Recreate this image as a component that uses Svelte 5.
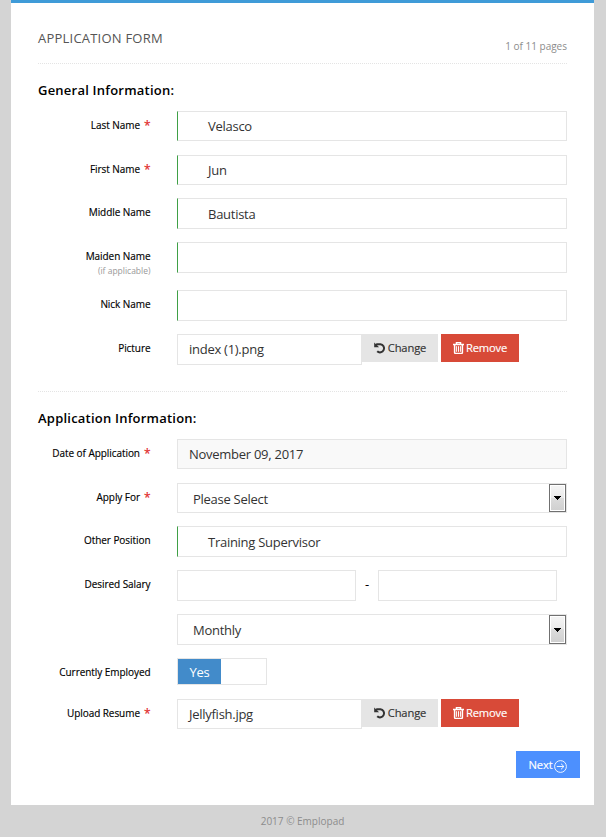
<script>
  const general = [
    { label: 'Last Name', req: true, kind: 'text', value: 'Velasco', h: 30, space: 44 },
    { label: 'First Name', req: true, kind: 'text', value: 'Jun', h: 30, space: 43 },
    { label: 'Middle Name', kind: 'text', value: 'Bautista', h: 31, space: 44 },
    { label: 'Maiden Name', note: '(if applicable)', kind: 'text', value: '', h: 31, space: 48 },
    { label: 'Nick Name', kind: 'text', value: '', h: 31, space: 44 },
    { label: 'Picture', kind: 'file', value: 'index (1).png', h: 31, space: 57 }
  ];
  const application = [
    { label: 'Date of Application', req: true, kind: 'date', value: 'November 09, 2017', h: 30, space: 44 },
    { label: 'Apply For', req: true, kind: 'select', value: 'Please Select', h: 30, space: 43 },
    { label: 'Other Position', kind: 'text', value: 'Training Supervisor', h: 31, space: 44 },
    { label: 'Desired Salary', kind: 'range', h: 31, space: 44 },
    { label: '', kind: 'select', value: 'Monthly', h: 31, space: 44 },
    { label: 'Currently Employed', kind: 'toggle', h: 27, space: 41 },
    { label: 'Upload Resume', req: true, kind: 'file', value: 'Jellyfish.jpg', h: 30, space: 52 }
  ];
</script>

{#snippet field(f)}
  <div class="row" style:height="{f.space}px">
    <div class="label">
      <span>{f.label}</span>{#if f.req}<b>*</b>{/if}
      {#if f.note}<small>{f.note}</small>{/if}
    </div>
    <div class="control" style:height="{f.h}px">
      {#if f.kind === 'text'}
        <div class="box valid">{f.value}</div>
      {:else if f.kind === 'date'}
        <div class="box readonly">{f.value}</div>
      {:else if f.kind === 'select'}
        <div class="box select"><span>{f.value}</span><i class="drop"><svg width="7" height="4" viewBox="0 0 7 4" shape-rendering="crispEdges"><path d="M0 0h7v1H6v1H5v1H4v1H3V3H2V2H1V1H0z" /></svg></i></div>
      {:else if f.kind === 'range'}
        <div class="box half"></div><span class="dash">-</span><div class="box half"></div>
      {:else if f.kind === 'toggle'}
        <div class="toggle"><span>Yes</span></div>
      {:else}
        <div class="box file">{f.value}</div>
        <button class="btn change">
          <svg width="12" height="12" viewBox="0 0 12 12"><path d="M2 3.2 3 2.2H6.4a4.1 4.1 0 1 1-3.2 7.1" fill="none" stroke="#333" stroke-width="2" /><path d="M.2.6v4.7h4.9z" fill="#333" /></svg><span>Change</span>
        </button>
        <button class="btn remove">
          <svg width="11" height="12" viewBox="0 0 11 12" fill="none" stroke="#fff"><path d="M0 2.5h11M3.5 2V.6h4V2M1.6 3v7.4q0 1 1 1h5.8q1 0 1-1V3" stroke-width="1.5" /><path d="M3.6 4.2v5.6M5.5 4.2v5.6M7.4 4.2v5.6" stroke-width="1" /></svg><span>Remove</span>
        </button>
      {/if}
    </div>
  </div>
{/snippet}

<div class="page">
  <main>
    <header>
      <h1>APPLICATION FORM</h1>
      <span class="count">1 of 11 pages</span>
    </header>
    <h2 class="first">General Information:</h2>
    {#each general as f}{@render field(f)}{/each}
    <h2 class="second">Application Information:</h2>
    {#each application as f}{@render field(f)}{/each}
    <button class="next"><span>Next</span>
      <svg width="13" height="13" viewBox="0 0 13 13" fill="none" stroke="#fff" stroke-width=".9"><circle cx="6.5" cy="6.5" r="5.9" /><path d="M2.8 6.5h7M7 3.7l2.9 2.8L7 9.3" /></svg>
    </button>
  </main>
  <footer>2017 © Emplopad</footer>
</div>

<style>
  .page {
    box-sizing: border-box;
    height: 837px;
    padding: 0 12px 0 11px;
    background: #d4d4d4;
    font-family: 'Open Sans', 'Noto Sans', sans-serif;
    color: #333;
    overflow: hidden;
  }
  main {
    box-sizing: border-box;
    height: 805px;
    padding: 0 27px;
    background: #fff;
    border-top: 3px solid #3f9bd8;
  }
  header {
    box-sizing: border-box;
    height: 61px;
    display: flex;
    justify-content: space-between;
    border-bottom: 1px dotted #e4e4e4;
  }
  h1 {
    margin: 25px 0 0;
    font-size: 13px;
    line-height: 20px;
    font-weight: 400;
    letter-spacing: 0.22px;
    color: #555;
  }
  .count {
    margin-top: 35px;
    font-size: 10px;
    line-height: 16px;
    color: #8c8c8c;
  }
  h2 {
    box-sizing: border-box;
    margin: 0;
    font-size: 13px;
    line-height: 20px;
    font-weight: 600;
    letter-spacing: 0.22px;
    color: #000;
  }
  .first { height: 47px; padding-top: 16px; }
  .second { height: 48px; padding-top: 16px; border-top: 1px dotted #e4e4e4; }
  .row {
    display: grid;
    grid-template-columns: 112.5px 390px;
    column-gap: 26.5px;
    align-items: start;
  }
  .label {
    padding-top: 7px;
    font-size: 10px;
    line-height: 15px;
    letter-spacing: -0.06px;
    text-align: right;
    color: #000;
    white-space: nowrap;
    -webkit-text-stroke: 0.15px;
  }
  .label b {
    position: relative;
    top: 1px;
    margin-left: 4px;
    font-size: 12px;
    line-height: 10px;
    font-weight: 400;
    color: #e02222;
  }
  small {
    display: block;
    font-size: 8.5px;
    line-height: 14px;
    letter-spacing: 0;
    color: #999;
    -webkit-text-stroke: 0;
  }
  .control { display: flex; }
  .box {
    box-sizing: border-box;
    display: flex;
    align-items: center;
    width: 100%;
    height: 100%;
    padding-left: 11px;
    border: 1px solid #e5e5e5;
    background: #fff;
    font-size: 13px;
    line-height: 20px;
    letter-spacing: -0.27px;
    color: #333;
    white-space: nowrap;
  }
  .valid { padding-left: 30px; border-left-color: #3fa046; }
  .readonly { background: #f9f9f9; }
  .select { justify-content: space-between; padding-left: 15px; }
  .select span { padding-top: 1px; }
  .drop {
    box-sizing: border-box;
    display: flex;
    align-items: center;
    justify-content: center;
    width: 17px;
    height: 100%;
    border: 1px solid #707070;
    box-shadow: inset 0 0 0 1px #fff;
    background: linear-gradient(#f3f3f3 0 10%, #e9e9e9 50%, #dcdcdc 50%, #cfcfcf);
  }
  .half { width: 179px; }
  .dash { width: 22px; text-align: center; font-size: 13px; line-height: 28px; color: #000; }
  .toggle {
    box-sizing: border-box;
    width: 90px;
    height: 27px;
    border: 1px solid #e5e5e5;
  }
  .toggle span {
    display: block;
    width: 43px;
    height: 25px;
    background: #428bca;
    color: #fff;
    font-size: 13px;
    line-height: 27px;
    letter-spacing: -0.3px;
    text-align: center;
  }
  .file { width: 185px; padding-bottom: 1px; }
  button {
    display: flex;
    align-items: center;
    padding: 0;
    border: 0;
    font-family: inherit;
    font-size: 11.2px;
    line-height: 18px;
    letter-spacing: -0.15px;
    -webkit-text-stroke: 0.15px;
  }
  .btn {
    justify-content: center;
    gap: 2px;
    height: 28px;
  }
  .btn svg { margin-top: -1px; }
  .change { width: 76px; background: #e5e5e5; color: #333; }
  .remove { width: 78px; margin-left: 3px; background: #d84a38; color: #fff; }
  .next {
    justify-content: center;
    gap: 2px;
    width: 64px;
    height: 27px;
    margin-left: 478px;
    background: #4d90fe;
    color: #fff;
  }
  .next svg { margin-top: 3px; }
  footer {
    padding-top: 8px;
    font-size: 10px;
    line-height: 16px;
    text-align: center;
    color: #8c8c8c;
  }
</style>
